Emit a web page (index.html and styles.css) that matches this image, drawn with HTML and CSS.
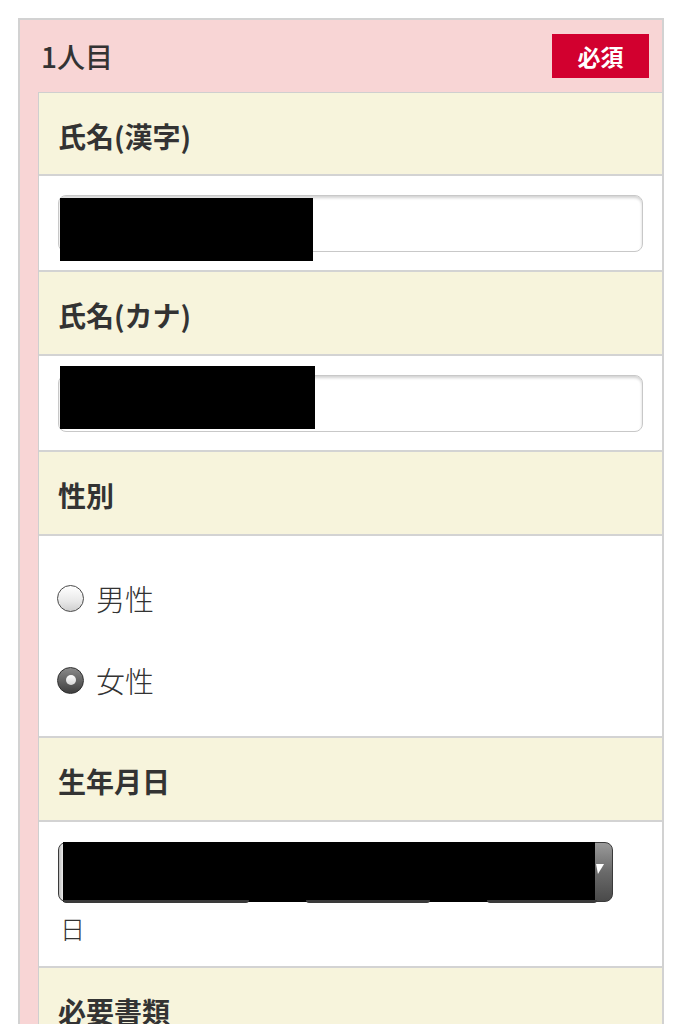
FILE: index.html
```html
<!DOCTYPE html>
<html lang="ja">
<head>
<meta charset="utf-8">
<link rel="stylesheet" href="styles.css">
</head>
<body>
<div class="card">
  <div class="card-head">
    <span class="card-title">1人目</span>
    <span class="badge">必須</span>
  </div>
  <div class="fields">
    <div class="label-row">氏名(漢字)</div>
    <div class="input-row">
      <div class="text-input">
        <span class="redact redact-a"></span>
      </div>
    </div>
    <div class="label-row">氏名(カナ)</div>
    <div class="input-row">
      <div class="text-input">
        <span class="redact redact-b"></span>
      </div>
    </div>
    <div class="label-row">性別</div>
    <div class="radio-row">
      <label class="radio-item"><span class="radio"></span><span class="radio-text">男性</span></label>
      <label class="radio-item"><span class="radio checked"></span><span class="radio-text">女性</span></label>
    </div>
    <div class="label-row">生年月日</div>
    <div class="date-row">
      <div class="select-bar">
        <span class="select-arrow"></span>
        <span class="redact redact-c"></span>
        <span class="tab tab-1"></span>
        <span class="tab tab-2"></span>
        <span class="tab tab-3"></span>
      </div>
      <div class="day-text">日</div>
    </div>
    <div class="label-row">必要書類</div>
  </div>
</div>
</body>
</html>
```

FILE: styles.css
```css
html, body {
  margin: 0;
  padding: 0;
  background: #ffffff;
}

body {
  font-family: "Noto Sans CJK JP", "Noto Sans", sans-serif;
  color: #333333;
  height: 1024px;
  overflow: hidden;
}

.card {
  margin: 18px 0 0 18px;
  width: 642px;
  background: #f8d5d5;
  border: 2px solid #d2d2d2;
  border-bottom: none;
}

.card-head {
  height: 72px;
  display: flex;
  align-items: center;
  justify-content: space-between;
  padding: 0 13px 0 21px;
}

.card-title {
  font-size: 28px;
  font-weight: 500;
  color: #333333;
}

.badge {
  width: 97px;
  height: 44px;
  background: #d2002f;
  color: #ffffff;
  font-size: 23px;
  font-weight: 700;
  display: flex;
  align-items: center;
  justify-content: center;
}

.fields {
  margin-left: 18px;
  border-left: 1px solid #cfcfcf;
  border-top: 1px solid #cfcfcf;
  background: #ffffff;
}

.label-row {
  height: 84px;
  box-sizing: border-box;
  border-bottom: 2px solid #d3d3d3;
  background: #f7f4dc;
  display: flex;
  align-items: center;
  padding: 4px 0 0 19px;
  font-size: 28px;
  font-weight: 700;
  color: #333333;
}

.fields > .label-row:first-child {
  height: 83px;
}

.input-row {
  height: 96px;
  box-sizing: border-box;
  border-bottom: 2px solid #d3d3d3;
  padding: 0 19px;
  display: flex;
  align-items: center;
}

.text-input {
  position: relative;
  flex: 1;
  height: 57px;
  box-sizing: border-box;
  border: 1px solid #c8c8c8;
  border-radius: 8px;
  background: #ffffff;
  box-shadow: inset 0 2px 3px rgba(0, 0, 0, 0.18);
}

.redact {
  position: absolute;
  background: #000000;
}

.redact-a {
  left: 1px;
  top: 2px;
  width: 253px;
  height: 63px;
}

.redact-b {
  left: 1px;
  top: -10px;
  width: 255px;
  height: 63px;
}

.radio-row {
  height: 202px;
  box-sizing: border-box;
  border-bottom: 2px solid #d3d3d3;
  padding: 0 19px;
  display: flex;
  flex-direction: column;
}

.radio-item {
  display: flex;
  align-items: center;
  height: 40px;
  gap: 12px;
}

.radio-item:first-child {
  margin-top: 42px;
}

.radio-item + .radio-item {
  margin-top: 42px;
}

.radio {
  width: 27px;
  height: 27px;
  border-radius: 50%;
  border: 1.5px solid #4a4a4a;
  box-sizing: border-box;
  background: linear-gradient(180deg, #ffffff 0%, #e9e9e9 60%, #cfcfcf 100%);
  margin-left: -1px;
  display: flex;
  align-items: center;
  justify-content: center;
}

.radio.checked {
  background: linear-gradient(180deg, #8a8a8a 0%, #3e3e3e 100%);
  border-color: #2e2e2e;
}

.radio.checked::after {
  content: "";
  width: 10px;
  height: 10px;
  border-radius: 50%;
  background: linear-gradient(180deg, #ffffff 0%, #d6d6d6 100%);
}

.radio-text {
  font-size: 29px;
  font-weight: 300;
  color: #333333;
}

.date-row {
  height: 146px;
  box-sizing: border-box;
  border-bottom: 2px solid #d3d3d3;
  padding: 20px 19px 0;
}

.select-bar {
  position: relative;
  width: 555px;
  height: 60px;
  border-radius: 8px;
  box-sizing: border-box;
  border: 1px solid #3a3a3a;
  background: linear-gradient(180deg, #9a9a9a 0%, #6a6a6a 50%, #4a4a4a 100%);
}

.select-bar::before {
  content: "";
  position: absolute;
  left: 0;
  top: 0;
  bottom: 0;
  width: 8px;
  border-radius: 7px 0 0 7px;
  background: linear-gradient(90deg, #bdbdbd 0%, #f4f4f4 60%, #dcdcdc 100%);
}

.redact-c {
  left: 4px;
  right: 17px;
  top: -1px;
  bottom: -1px;
}

.select-arrow {
  position: absolute;
  right: 9px;
  top: 21px;
  width: 0;
  height: 0;
  border-left: 4px solid transparent;
  border-right: 4px solid transparent;
  border-top: 10px solid #ffffff;
  transform: skewX(-12deg);
  z-index: 1;
}

.tab {
  position: absolute;
  bottom: -2px;
  height: 3px;
  background: #3a3a3a;
  border-radius: 0 0 6px 6px;
}

.tab-1 { left: 4px; width: 186px; }
.tab-2 { left: 247px; width: 124px; }
.tab-3 { left: 428px; width: 110px; }

.day-text {
  margin-top: 11px;
  font-size: 25px;
  font-weight: 300;
  line-height: 30px;
  color: #333333;
  padding-left: 2px;
}
```
